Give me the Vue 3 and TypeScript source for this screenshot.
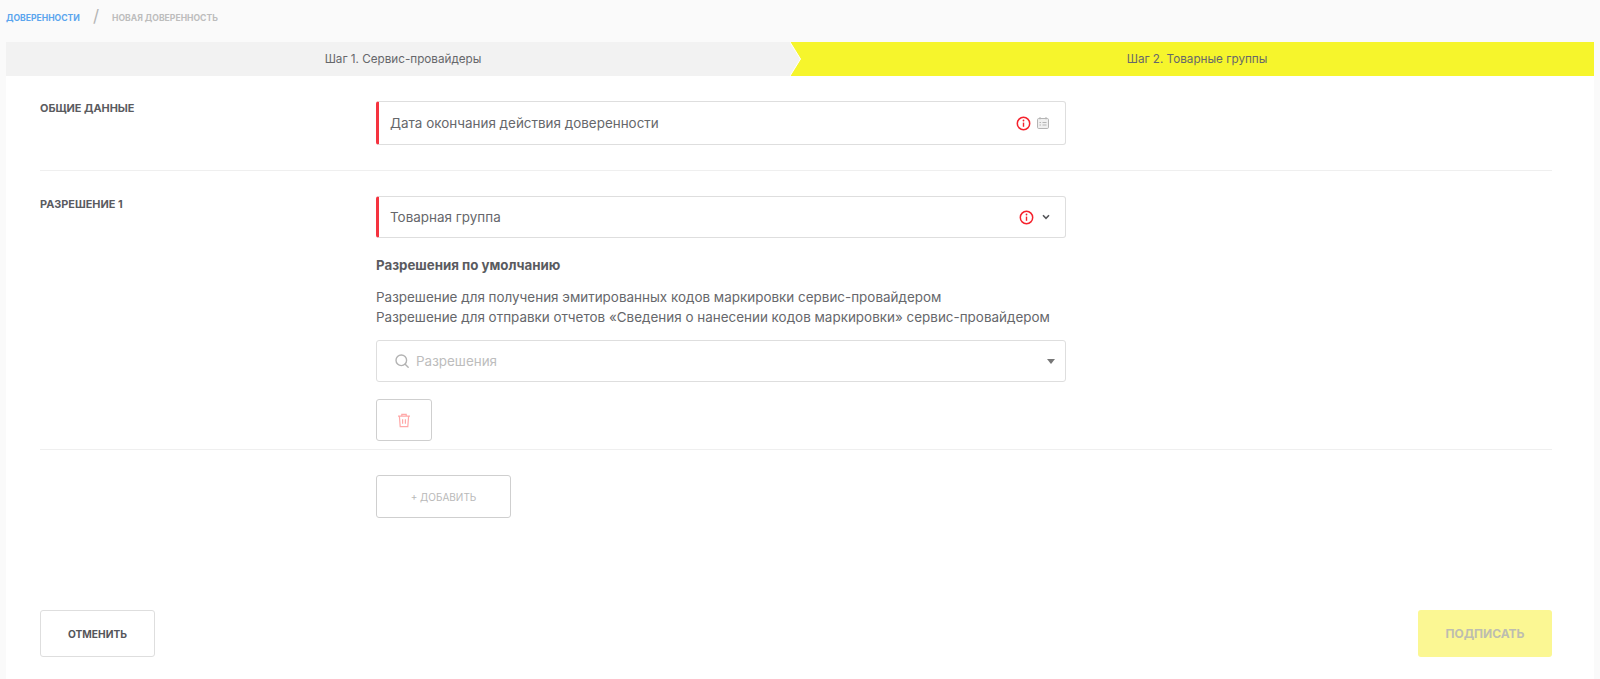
<script setup lang="ts">
const defaultPermissions: string[] = [
  'Разрешение для получения эмитированных кодов маркировки сервис-провайдером',
  'Разрешение для отправки отчетов «Сведения о нанесении кодов маркировки» сервис-провайдером',
];
</script>

<template>
  <div class="page">
    <nav class="crumbs">
      <span class="crumb-link">ДОВЕРЕННОСТИ</span>
      <span class="crumb-sep">/</span>
      <span class="crumb-current">НОВАЯ ДОВЕРЕННОСТЬ</span>
    </nav>

    <div class="steps">
      <div class="step step-done">Шаг 1. Сервис-провайдеры</div>
      <div class="step step-active">
        <svg class="step-arrow" width="11" height="34" viewBox="0 0 11 34">
          <path d="M0 0 L10.5 17 L0 34 Z" fill="#f2f2f2" />
          <path d="M0 0 L10.5 17 L0 34" fill="none" stroke="#fff" stroke-width="1" />
        </svg>
        Шаг 2. Товарные группы
      </div>
    </div>

    <main class="card">
      <section class="row row-general">
        <div class="row-label">ОБЩИЕ ДАННЫЕ</div>
        <div class="row-body">
          <div class="field field-error field-date">
            <span class="field-text">Дата окончания действия доверенности</span>
            <svg class="icon-info" width="15" height="15" viewBox="0 0 15 15">
              <circle cx="7.5" cy="7.5" r="6.2" fill="none" stroke="#f5222d" stroke-width="1.5" />
              <path d="M7.5 6.6V10.8" stroke="#f5222d" stroke-width="1.4" />
              <circle cx="7.5" cy="4.5" r="0.9" fill="#f5222d" />
            </svg>
            <svg class="icon-cal" width="14" height="14" viewBox="0 0 14 14">
              <rect x="1.5" y="2.5" width="11" height="10" rx="1.2" fill="#f0f0f0" stroke="#b5b5b5" />
              <path d="M4 1v2.4M10 1v2.4" stroke="#b5b5b5" />
              <path d="M3.5 6.5h1.5M6.5 6.5h4M3.5 9h1.5M6.5 9h4" stroke="#b5b5b5" />
            </svg>
          </div>
        </div>
      </section>

      <section class="row row-permission">
        <div class="row-label">РАЗРЕШЕНИЕ 1</div>
        <div class="row-body">
          <div class="field field-error field-group">
            <span class="field-text">Товарная группа</span>
            <svg class="icon-info" width="15" height="15" viewBox="0 0 15 15">
              <circle cx="7.5" cy="7.5" r="6.2" fill="none" stroke="#f5222d" stroke-width="1.5" />
              <path d="M7.5 6.6V10.8" stroke="#f5222d" stroke-width="1.4" />
              <circle cx="7.5" cy="4.5" r="0.9" fill="#f5222d" />
            </svg>
            <svg class="icon-chevron" width="8" height="6" viewBox="0 0 8 6">
              <path d="M1 1.3L4 4.3L7 1.3" fill="none" stroke="#55565a" stroke-width="1.6" />
            </svg>
          </div>

          <h3 class="perm-title">Разрешения по умолчанию</h3>
          <p v-for="line in defaultPermissions" :key="line" class="perm-line">{{ line }}</p>

          <div class="field field-search">
            <svg class="icon-search" width="16" height="16" viewBox="0 0 16 16">
              <circle cx="7.3" cy="7.3" r="5.3" fill="none" stroke="#b3b3b3" stroke-width="1.4" />
              <path d="M11.2 11.2L14.2 14.2" stroke="#b3b3b3" stroke-width="1.4" stroke-linecap="round" />
            </svg>
            <span class="field-placeholder">Разрешения</span>
            <span class="caret"></span>
          </div>

          <button class="btn-delete" type="button" aria-label="Удалить">
            <svg width="14" height="15" viewBox="0 0 14 15">
              <path d="M1 3.2h12M4.8 3V1.4h4.4V3M2.4 3.2l.8 10.4h7.6l.8-10.4M5.6 6.2v4.6M8.4 6.2v4.6"
                fill="none" stroke="#ffa8a8" stroke-width="1.2" />
            </svg>
          </button>
        </div>
      </section>

      <section class="row row-add">
        <div class="row-label"></div>
        <div class="row-body">
          <button class="btn-add" type="button">+ ДОБАВИТЬ</button>
        </div>
      </section>

      <footer class="actions">
        <button class="btn-cancel" type="button">ОТМЕНИТЬ</button>
        <button class="btn-sign" type="button">ПОДПИСАТЬ</button>
      </footer>
    </main>
  </div>
</template>

<style>
html,
body {
  margin: 0;
  background: #fafafa;
}
</style>

<style scoped>
.page {
  height: 679px;
  overflow: hidden;
  padding: 0 6px;
  box-sizing: border-box;
  font-family: Inter, "Noto Sans", sans-serif;
  color: #5a5b5f;
}

.crumbs {
  height: 42px;
  padding-bottom: 7px;
  box-sizing: border-box;
  display: flex;
  align-items: center;
  font-size: 8.6px;
  font-weight: 700;
}

.crumb-link {
  color: #5aa5ee;
}

.crumb-sep {
  margin: -3px 13px 0;
  font-size: 17px;
  font-weight: 400;
  color: #b5b5b5;
}

.crumb-current {
  color: #bdbdbd;
}

.steps {
  display: flex;
  height: 34px;
  font-size: 11.7px;
  line-height: 34px;
  text-align: center;
  color: #66676b;
}

.step {
  flex: 1;
  position: relative;
  box-sizing: border-box;
  padding-left: 10px;
}

.step-done {
  background: #f2f2f2;
  flex: 0 0 784px;
}

.step-active {
  background: #f6f52c;
}

.step-arrow {
  position: absolute;
  left: 0;
  top: 0;
}

.card {
  background: #fff;
  padding: 0 42px 0 34px;
  height: 604px;
  display: flex;
  flex-direction: column;
}

.row {
  display: flex;
  border-bottom: 1px solid #efefef;
}

.row-label {
  flex: 0 0 336px;
  font-size: 10.9px;
  font-weight: 700;
  line-height: 14px;
  padding-top: 25px;
}

.row-body {
  width: 690px;
}

.row-general {
  height: 94px;
}

.row-general .row-body {
  padding-top: 25px;
}

.row-permission {
  height: 278px;
}

.row-permission .row-label {
  padding-top: 26px;
}

.row-permission .row-body {
  padding-top: 25px;
}

.row-add {
  border-bottom: 0;
  padding-top: 25px;
}

.field {
  box-sizing: border-box;
  display: flex;
  align-items: center;
  border: 1px solid #dedede;
  border-radius: 3px;
  font-size: 13.45px;
  color: #66676b;
}

.field-error {
  border-left: 3px solid #f5333f;
  padding-left: 11px;
}

.field-date {
  height: 44px;
  padding-right: 15px;
}

.field-group {
  height: 42px;
  padding-right: 15px;
}

.field-text {
  flex: 1;
}

.field-date .icon-cal {
  margin-left: 5px;
}

.icon-chevron {
  margin-left: 8px;
}

.perm-title {
  margin: 19px 0 14px;
  font-size: 13.3px;
  font-weight: 700;
  line-height: 16px;
}

.perm-line {
  margin: 0;
  font-size: 13.45px;
  line-height: 20px;
  color: #66676b;
}

.field-search {
  height: 42px;
  margin-top: 13px;
  padding: 0 10px 0 17px;
}

.field-placeholder {
  flex: 1;
  margin-left: 6px;
  color: #bdbdbd;
}

.caret {
  width: 0;
  height: 0;
  border-left: 4.5px solid transparent;
  border-right: 4.5px solid transparent;
  border-top: 5px solid #777;
}

button {
  font-family: inherit;
  cursor: pointer;
  background: #fff;
}

.btn-delete {
  display: flex;
  align-items: center;
  justify-content: center;
  width: 56px;
  height: 42px;
  margin-top: 17px;
  padding: 0;
  border: 1px solid #cfcfcf;
  border-radius: 3px;
}

.btn-add {
  width: 135px;
  height: 43px;
  padding: 0;
  border: 1px solid #cfcfcf;
  border-radius: 3px;
  font-size: 10px;
  color: #b9b9b9;
}

.actions {
  margin-top: auto;
  margin-bottom: 23px;
  display: flex;
  justify-content: space-between;
}

.btn-cancel {
  width: 115px;
  height: 47px;
  padding: 0;
  border: 1px solid #dedede;
  border-radius: 3px;
  font-size: 10.2px;
  font-weight: 700;
  color: #55565a;
}

.btn-sign {
  width: 134px;
  height: 47px;
  padding: 0;
  border: 0;
  border-radius: 3px;
  background: #fbf793;
  font-size: 12px;
  font-weight: 700;
  color: #bdbdb0;
}
</style>
